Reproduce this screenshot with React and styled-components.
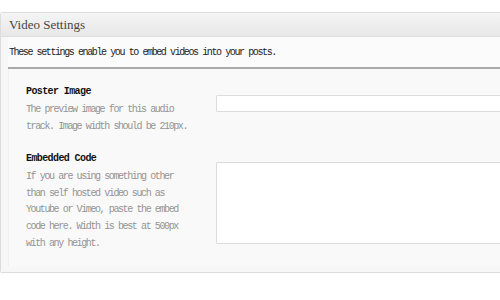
import React from 'react';
import styled, { createGlobalStyle } from 'styled-components';

const GlobalStyle = createGlobalStyle`
    html, body {
        margin: 0;
        padding: 0;
        background: #fff;
        overflow: hidden;
    }
`;

const fields = [
    {
        name: 'Poster Image',
        text: 'The preview image for this audio track. Image width should be 210px.',
        kind: 'input',
    },
    {
        name: 'Embedded Code',
        text: 'If you are using something other than self hosted video such as Youtube or Vimeo, paste the embed code here. Width is best at 500px with any height.',
        kind: 'textarea',
    },
];

const Field = ({ field }) => (
    <Row>
        <Label>
            <Name>{field.name}</Name>
            <Desc>{field.text}</Desc>
        </Label>
        {field.kind === 'textarea' ? <Area /> : <Input type="text" />}
    </Row>
);

const App = () => (
    <>
        <GlobalStyle />
        <Panel>
            <Header>
                <Title>Video Settings</Title>
            </Header>
            <Body>
                <Intro>These settings enable you to embed videos into your posts.</Intro>
                <Fields>
                    {fields.map((f) => (
                        <Field key={f.name} field={f} />
                    ))}
                </Fields>
            </Body>
        </Panel>
    </>
);

export default App;

const Panel = styled.div`
    margin-top: 12px;
    width: 100%;
    box-sizing: border-box;
    border: 1px solid #dcdcdc;
    border-right: none;
    border-radius: 3px 0 0 3px;
    background: #f6f6f6;
    box-shadow: 0 1px 1px rgba(0, 0, 0, 0.04);
`;

const Header = styled.div`
    height: 23px;
    display: flex;
    align-items: center;
    padding-left: 8px;
    background: linear-gradient(#f4f4f4, #e8e8e8);
    border-bottom: 1px solid #dfdfdf;
`;

const Title = styled.h3`
    margin: 0;
    font-family: 'Liberation Serif', serif;
    font-weight: normal;
    font-size: 13px;
    color: #464646;
`;

const Body = styled.div`
    padding: 0 0 6px 7px;
    background: #f7f7f7;
`;

const Intro = styled.p`
    margin: 0;
    height: 30px;
    display: flex;
    align-items: center;
    padding-left: 1px;
    background: #fbfbfb;
    border-bottom: 2px solid #a9a9a9;
    font-family: 'Liberation Mono', monospace;
    font-size: 10px;
    letter-spacing: -1.4px;
    color: #222;
`;

const Fields = styled.div`
    display: flex;
    flex-direction: column;
    gap: 16px;
    padding: 15px 0 14px 17px;
    background: #f9f9f9;
    border-left: 1px solid #f0f0f0;
`;

const Row = styled.div`
    display: grid;
    grid-template-columns: 190px 1fr;
    align-items: start;
`;

const Label = styled.div`
    display: flex;
    flex-direction: column;
`;

const Name = styled.strong`
    font-family: 'Liberation Mono', monospace;
    font-size: 10px;
    line-height: 16px;
    letter-spacing: -0.6px;
    color: #111;
`;

const Desc = styled.p`
    margin: 2px 0 0;
    width: 166px;
    font-family: 'Liberation Mono', monospace;
    font-size: 10px;
    line-height: 16.6px;
    letter-spacing: -1.4px;
    color: #949494;
`;

const Input = styled.input`
    margin-top: 11px;
    height: 17px;
    box-sizing: border-box;
    border: 1px solid #dcdcdc;
    border-right: none;
    border-radius: 2px 0 0 2px;
    background: #fff;
    padding: 0 4px;
`;

const Area = styled.textarea`
    margin-top: 11px;
    height: 82px;
    box-sizing: border-box;
    border: 1px solid #dcdcdc;
    border-right: none;
    border-radius: 2px 0 0 2px;
    background: #fff;
    resize: none;
`;
